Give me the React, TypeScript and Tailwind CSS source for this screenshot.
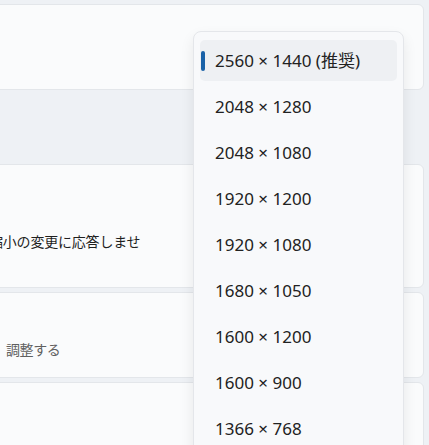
const resolutions = [
  "2560 × 1440 (推奨)",
  "2048 × 1280",
  "2048 × 1080",
  "1920 × 1200",
  "1920 × 1080",
  "1680 × 1050",
  "1600 × 1200",
  "1600 × 900",
  "1366 × 768",
];

const font = "font-['Noto_Sans','Noto_Sans_CJK_JP',sans-serif]";

const App = () => {
  const selected = 0;

  return (
    <div
      className={`relative w-[429px] h-[445px] overflow-hidden bg-[#eef1f5] ${font}`}
    >
      <div className="flex flex-col pt-[4px] pr-[5px]">
        {/* top card */}
        <div className="h-[86px] -ml-2 rounded-r-[6px] border border-[#e3e6ea] bg-[#fafbfc]" />
        {/* section gap */}
        <div className="h-[74px]" />
        {/* display scaling card */}
        <div className="h-[124px] -ml-2 rounded-r-[6px] border border-[#e3e6ea] bg-[#fafbfc] flex flex-col justify-center pt-[30px]">
          <p className="-ml-[4px] text-[14px] text-[#1f1f1f] whitespace-nowrap tracking-[-0.2px]">
            縮小の変更に応答しませ
          </p>
        </div>
        <div className="h-[86px] mt-[4px] -ml-2 rounded-r-[6px] border border-[#e3e6ea] bg-[#fafbfc] flex flex-col justify-center pt-[28px]">
          <p className="ml-[13px] text-[14px] text-[#606060] whitespace-nowrap tracking-[-0.4px]">
            調整する
          </p>
        </div>
        <div className="h-[80px] mt-[4px] -ml-2 rounded-r-[6px] border border-[#e3e6ea] bg-[#fafbfc]" />
      </div>

      {/* resolution dropdown */}
      <div className="absolute left-[193px] top-[31px] w-[211px] h-[440px] rounded-[8px] border border-[#e4e6ea] bg-[#f8f9fb] shadow-[0_6px_14px_rgba(0,0,0,0.08)] px-[6px] pt-[8px]">
        <ul className="flex flex-col gap-[5px]">
          {resolutions.map((r, i) => (
            <li
              key={r}
              className={`relative h-[41px] flex items-center pl-[15px] rounded-[5px] text-[17px] text-[#222222] ${
                i === selected ? "bg-[#eef0f3]" : ""
              }`}
            >
              {i === selected && (
                <span className="absolute left-[1px] top-[11px] w-[4px] h-[20px] rounded-full bg-[#1a62a8]" />
              )}
              {r}
            </li>
          ))}
        </ul>
      </div>
    </div>
  );
};

export default App;
